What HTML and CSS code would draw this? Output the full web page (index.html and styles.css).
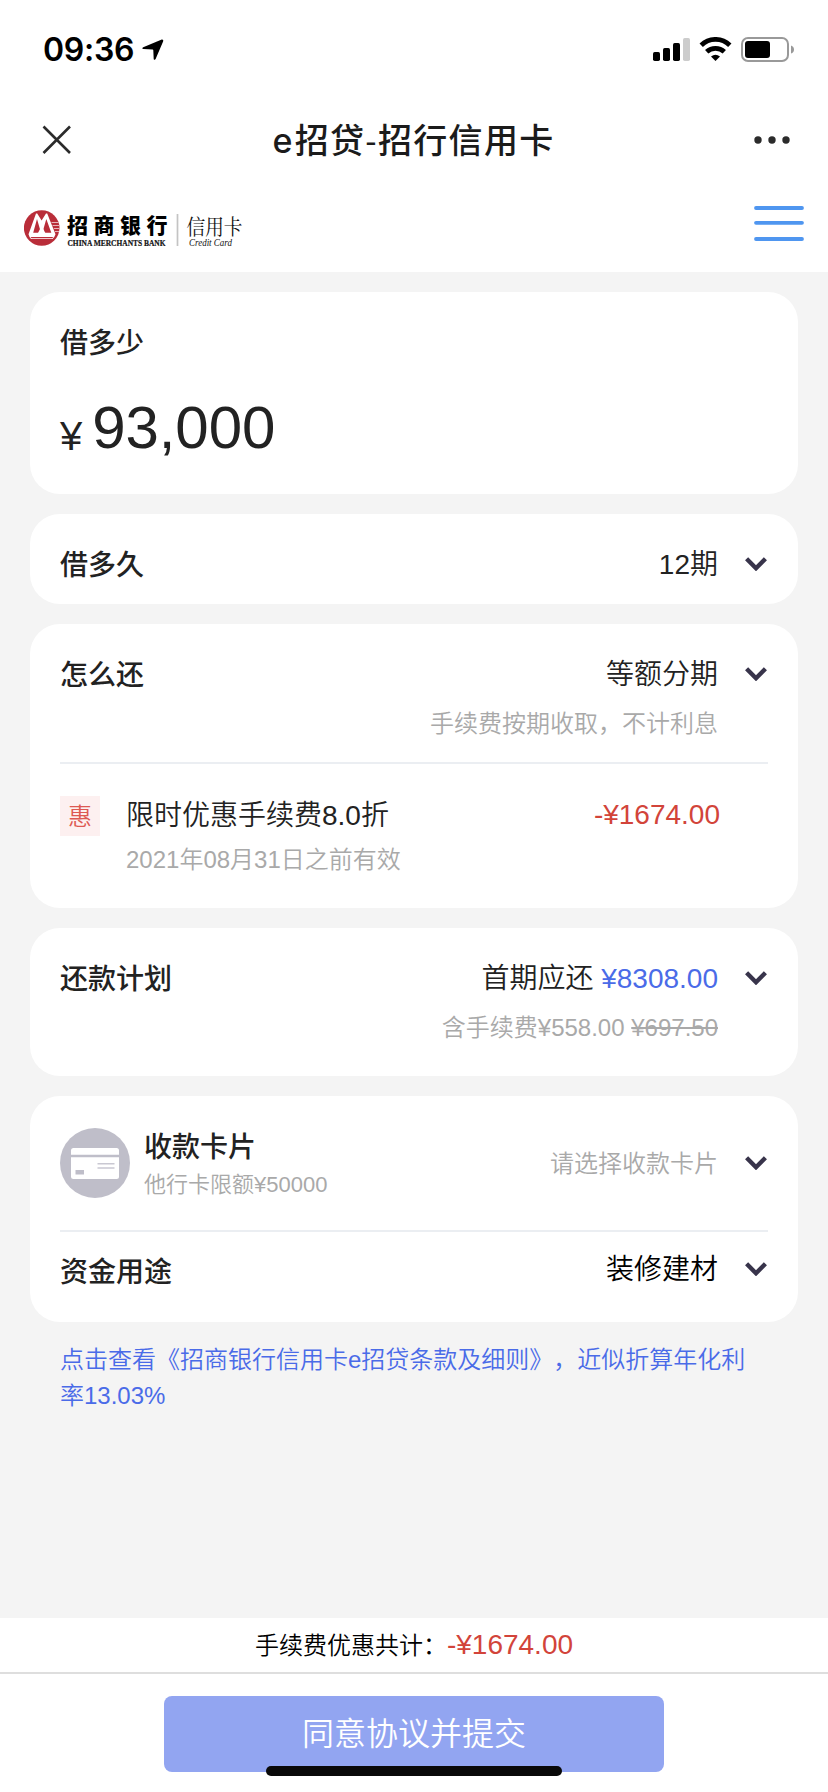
FILE: index.html
```html
<!DOCTYPE html>
<html lang="zh-CN">
<head>
<meta charset="utf-8">
<title>e招贷-招行信用卡</title>
<link rel="stylesheet" href="styles.css">
</head>
<body>
<svg class="defs" width="0" height="0" aria-hidden="true">
  <symbol id="chevron" viewBox="0 0 22 14"><path d="M1.600 1.800 11 11.200 20.400 1.800" fill="none" stroke="#38344b" stroke-width="4.400"/></symbol>
</svg>
<div class="screen">
  <div class="status-bar">
    <span class="time">09:36</span>
    <svg class="location" width="22" height="22" viewBox="0 0 22 22"><path d="M19.200.8C20.600.2 21.700 1 21.100 2.500L13.600 20C13.200 21 11.800 21 11.700 19.900L11.300 11.200Q11.200 10.600 10.600 10.500L1.500 10.100C.200 10 0 8.700 1.200 8.200Z"/></svg>
    <svg class="indicators" width="142" height="26" viewBox="0 0 142 26">
      <rect x="0" y="15" width="7" height="9" rx="1.700"/>
      <rect x="10" y="11" width="7" height="13" rx="1.700"/>
      <rect x="20" y="6" width="7" height="18" rx="1.700"/>
      <rect x="30" y="1" width="7" height="23" rx="1.700" fill="#ccc"/>
      <g fill="none" stroke="#000" stroke-width="4.800">
        <path d="M48.200 8.200A20.500 20.500 0 0 1 76.800 8.200"/>
        <path d="M53.700 14.800A12.800 12.800 0 0 1 71.300 14.800"/>
      </g>
      <path d="M58 19.500Q62.500 15.800 67 19.500L62.500 24.100Z"/>
      <rect x="89" y="1" width="46" height="23" rx="6" fill="none" stroke="#999" stroke-width="2"/>
      <rect x="92" y="4" width="25" height="17" rx="3"/>
      <path d="M138 8.500Q141 9.500 141 12.500T138 16.500Z" fill="#999"/>
    </svg>
  </div>
  <div class="nav">
    <svg class="close" width="30" height="30" viewBox="0 0 30 30"><path d="M1.500 1.500 28 28M28 1.500 1.500 28" stroke="#2b2b2b" stroke-width="2.600"/></svg>
    <h1 class="nav-title"><span class="latin">e</span>招贷-招行信用卡</h1>
    <svg class="more" width="36" height="8" viewBox="0 0 36 8" fill="#2b2b2b"><circle cx="4" cy="4" r="3.700"/><circle cx="18" cy="4" r="3.700"/><circle cx="32" cy="4" r="3.700"/></svg>
  </div>
  <div class="brand">
    <svg class="logo" width="222" height="40" viewBox="0 0 222 40">
      <circle cx="17.700" cy="20" r="17.800" fill="#b92d39"/>
      <path d="M4.500 26.300 12 5.500H13.200L17.600 12.500 22 5.500H23.200L31.500 26.300Q30.500 29.500 28.500 31H7Q5.200 29 4.500 26.300Z" fill="#fff"/>
      <path d="M9.200 24.800 13 11 17 24.800ZM18.400 24.800 22.300 11 27.300 24.800Z" fill="#b92d39"/>
      <path d="M14 25 17.700 17.500 21.300 25Z" fill="#fff"/>
      <path d="M6.500 29H29.500L28 30.200H7.500Z" fill="#b92d39"/>
      <path d="M27.500 14.500H34.500M28.500 17.500H35.300M29.800 20.500H35.300M31 23.500H35" stroke="#e7b5ba" stroke-width="1"/>
      <text class="logo-cn" x="43" y="25">招商银行</text>
      <text class="logo-en" x="43.500" y="37.700" textLength="98" lengthAdjust="spacingAndGlyphs">CHINA MERCHANTS BANK</text>
      <path d="M153.500 6V38" stroke="#c4c4c4" stroke-width="1.700"/>
      <text class="logo-card" x="162.500" y="26" textLength="56" lengthAdjust="spacingAndGlyphs">信用卡</text>
      <text class="logo-card-en" x="165" y="37.700" textLength="43" lengthAdjust="spacingAndGlyphs">Credit Card</text>
    </svg>
    <svg class="menu" width="50" height="36" viewBox="0 0 50 36"><path d="M2 2H48M2 16.800H48M2 33H48" stroke="#4f96f0" stroke-width="3.800" stroke-linecap="round"/></svg>
  </div>

  <main class="content">
    <section class="card card-amount">
      <h2 class="label">借多少</h2>
      <div class="amount"><span class="currency">¥</span><span class="number">93,000</span></div>
    </section>

    <section class="card card-term">
      <div class="row"><h2 class="label">借多久</h2><span class="value">12期</span><svg class="chevron"><use href="#chevron"/></svg></div>
    </section>

    <section class="card card-method">
      <div class="row"><h2 class="label">怎么还</h2><span class="value">等额分期</span><svg class="chevron"><use href="#chevron"/></svg></div>
      <p class="note">手续费按期收取，不计利息</p>
      <div class="promo">
        <span class="badge">惠</span>
        <div class="promo-text"><div class="promo-title">限时优惠手续费8.0折</div><div class="promo-date">2021年08月31日之前有效</div></div>
        <span class="discount">-¥1674.00</span>
      </div>
    </section>

    <section class="card card-plan">
      <div class="row"><h2 class="label">还款计划</h2><span class="value">首期应还 <span class="blue">¥8308.00</span></span><svg class="chevron"><use href="#chevron"/></svg></div>
      <p class="note">含手续费¥558.00 <del>¥697.50</del></p>
    </section>

    <section class="card card-payee">
      <div class="payee">
        <svg class="card-icon" width="70" height="70" viewBox="0 0 70 70">
          <circle cx="35" cy="35" r="35" fill="#bfbec9"/>
          <rect x="11" y="20" width="48" height="31" rx="2.500" fill="#fff"/>
          <path d="M11 28H59" stroke="#bfbec9" stroke-width="2.400"/>
          <rect x="15.500" y="42" width="8.500" height="4.500" fill="#bfbec9"/>
          <path d="M37.500 35.700H54.500M37.500 40H54.500" stroke="#c9c8d2" stroke-width="1.500"/>
        </svg>
        <div class="payee-text"><h2 class="label">收款卡片</h2><div class="limit">他行卡限额¥50000</div></div>
        <span class="placeholder">请选择收款卡片</span>
        <svg class="chevron"><use href="#chevron"/></svg>
      </div>
      <div class="purpose">
        <h2 class="label purpose-label">资金用途</h2>
        <span class="value purpose-value">装修建材</span>
        <svg class="chevron"><use href="#chevron"/></svg>
      </div>
    </section>

    <a class="terms">点击查看《招商银行信用卡e招贷条款及细则》，近似折算年化利<br>率13.03%</a>
  </main>

  <footer class="footer">
    <div class="total"><span>手续费优惠共计：</span><span class="total-value">-¥1674.00</span></div>
    <div class="submit-area"><button class="submit">同意协议并提交</button></div>
    <div class="home-indicator"></div>
  </footer>
</div>
</body>
</html>
```
FILE: styles.css
```css
* { box-sizing: border-box; }
body {
  margin: 0;
  background: #fff;
  color: #222;
  font-family: "Liberation Sans", "Noto Sans CJK SC", sans-serif;
  font-weight: 350;
  text-spacing-trim: space-all;
}
h1, h2, p { margin: 0; }
svg { display: block; flex: none; }
.defs { position: absolute; }
.screen {
  position: relative;
  display: flex;
  flex-direction: column;
  width: 828px;
  height: 1792px;
  overflow: hidden;
}

.status-bar {
  display: flex;
  align-items: flex-start;
  height: 96px;
  padding: 30px 33px 0 43px;
}
.time {
  width: 99px;
  font: 600 32px/40px Inter, sans-serif;
  letter-spacing: -0.3px;
  color: #000;
}
.location { margin-top: 9px; }
.indicators { margin: 7px 0 0 auto; }

.nav {
  display: grid;
  grid-template-columns: 60px 1fr 60px;
  align-items: center;
  height: 88px;
  padding: 0 38px 0 42px;
}
.nav-title {
  padding: 1px 5px 0 0;
  font-size: 34px;
  line-height: 48px;
  font-weight: 500;
  letter-spacing: 1.3px;
  text-align: center;
  color: #1b1b1b;
}
.latin { margin-right: 1px; font-family: Inter, sans-serif; line-height: 1; }
.more { justify-self: end; }

.brand {
  display: flex;
  justify-content: space-between;
  height: 88px;
  padding: 22px 24px 0;
}
.logo { margin-top: 2px; }
.logo text { fill: #111; }
.logo .logo-cn { font: 900 21px "Noto Sans CJK SC", sans-serif; letter-spacing: 5.5px; fill: #000; }
.logo .logo-en { font: bold 8.5px "Liberation Serif", serif; stroke: #111; stroke-width: 0.2px; }
.logo .logo-card { font: 400 21px "Noto Serif CJK SC", "Noto Sans CJK SC", serif; }
.logo .logo-card-en { font: italic 9.5px "Liberation Serif", serif; }

.content {
  display: flex;
  flex-direction: column;
  gap: 20px;
  flex: 1;
  padding: 20px 30px 0;
  background: #f4f4f4;
}
.card {
  flex: none;
  padding: 31px 30px 0;
  border-radius: 30px;
  background: #fff;
}
.card-amount { height: 202px; }
.card-term { height: 90px; }
.card-method { height: 284px; }
.card-plan { height: 148px; }
.card-payee { height: 226px; padding-top: 0; }

.label {
  padding-top: 1px;
  font-size: 28px;
  line-height: 40px;
  font-weight: 500;
}
.amount {
  display: flex;
  align-items: flex-start;
  gap: 10px;
  margin-top: 31px;
}
.currency { margin-top: 6px; font-size: 40px; line-height: 70px; }
.number { font-size: 60px; line-height: 66px; letter-spacing: -0.1px; }

.row { display: flex; align-items: flex-start; }
.row .value { margin-left: auto; }
.value { font-size: 28px; line-height: 40px; }
.chevron { width: 22px; height: 14px; margin-left: 27px; margin-right: 1px; }
.row .chevron { margin-top: 12px; }
.blue { color: #4a6be8; }
.note {
  margin: 10px 50px 0 0;
  font-size: 24px;
  line-height: 36px;
  text-align: right;
  color: #a9a9a9;
}

.promo {
  display: flex;
  margin-top: 20px;
  padding-top: 32px;
  border-top: 2px solid #ebeef2;
}
.badge {
  width: 40px;
  height: 40px;
  background: #fdf0f0;
  font-size: 24px;
  line-height: 41px;
  text-align: center;
  color: #dd5953;
}
.promo-text { margin-left: 26px; }
.promo-title { font-size: 28px; line-height: 40px; }
.promo-date { margin-top: 6px; font-size: 24px; line-height: 36px; color: #a9a9a9; }
.discount { margin: -1px 48px 0 auto; font-size: 28px; line-height: 40px; color: #d2443a; }

.payee { display: flex; align-items: center; height: 134px; }
.payee-text { margin-left: 14px; padding-top: 3px; }
.limit { font-size: 22px; line-height: 34px; color: #a9a9a9; }
.placeholder { margin-left: auto; padding-top: 1px; font-size: 24px; line-height: 36px; color: #a9a9a9; }
.purpose {
  display: flex;
  align-items: center;
  height: 76px;
  border-top: 2px solid #ebeef2;
}
.purpose-label { padding-top: 8px; }
.purpose-value { margin-left: auto; padding-top: 1px; color: #000; }

.terms {
  margin: 0 30px;
  font-size: 24px;
  line-height: 36px;
  color: #4a6be8;
}

.footer {
  position: relative;
  flex: none;
  height: 174px;
  background: #fff;
}
.total {
  display: flex;
  justify-content: center;
  align-items: baseline;
  height: 56px;
  padding-top: 7px;
  border-bottom: 2px solid #dedede;
  font-size: 24px;
  line-height: 40px;
  color: #000;
}
.total-value { font-size: 28px; color: #d2443a; }
.submit-area { display: flex; justify-content: center; padding-top: 22px; }
.submit {
  width: 500px;
  height: 76px;
  padding: 0;
  border: 0;
  border-radius: 8px;
  background: #92a5f1;
  font: inherit;
  font-size: 32px;
  line-height: 76px;
  color: #fff;
}
.home-indicator {
  position: absolute;
  left: 266px;
  bottom: 16px;
  width: 296px;
  height: 10px;
  border-radius: 5px;
  background: #090909;
}
```
